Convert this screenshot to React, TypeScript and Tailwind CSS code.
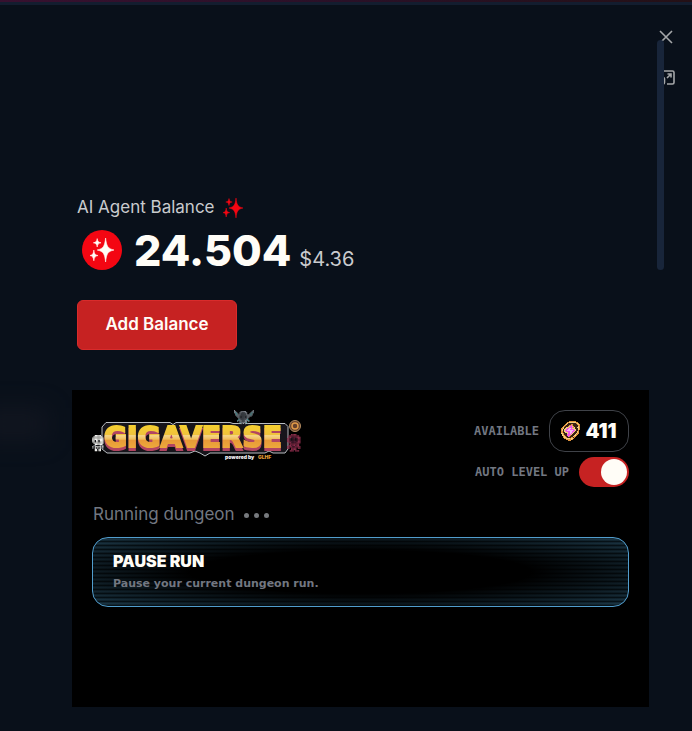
import React, { useState } from 'react';

const palette: Record<string, string> = {
  k: '#17181c',
  w: '#f1f1ee',
  g: '#858a92',
  d: '#4b5057',
  c: '#55b5b5',
  r: '#8b2d4b',
  m: '#4d1b32',
  o: '#e3943b',
  y: '#f4d07c',
  b: '#3a2114',
  p: '#ee56e4',
  l: '#f6b6f0',
};

interface SpriteProps {
  rows: string[];
  x?: number;
  y?: number;
  size: number;
}

const Sprite: React.FC<SpriteProps> = ({ rows, x = 0, y = 0, size }) => (
  <g>
    {rows.map((row, j) =>
      row.split('').map((cell, i) =>
        palette[cell] ? (
          <rect key={`${j}-${i}`} x={x + i * size} y={y + j * size} width={size} height={size} fill={palette[cell]} />
        ) : null
      )
    )}
  </g>
);

const skeleton = [
  '...wwwww...',
  '..wwwwwww..',
  '.wwwwwwwww.',
  '.wwwwwwwww.',
  '.wwkwwkwww.',
  '.wwkwwkwww.',
  '..wwwwwwww.',
  '...wwwwww..',
  '..ggkkkg.g.',
  '.w.wwwww.w.',
  '.g.wkwkw.g.',
  '...wwkww...',
  '...ww.ww...',
];

const knight = [
  'g................g',
  'gg....ggggg.....gg',
  'gcg..ggdddgg...gcg',
  '.gcg.gdddddg..gcg.',
  '.gcgggdddddggggcg.',
  '..gggdddddddgggg..',
  '...ggdkdddkdgg....',
  '....gdddddddg.....',
  '....cgdddddgc.....',
  '...cgggdddgggc....',
  '...gkggdddggkg....',
  '....kcgggggck.....',
  '......gk.kg.......',
];

const imp = [
  '...rrrr....',
  '.rrrrrrrr..',
  '.rrmmmmrrr.',
  'rrmkmmkmrr.',
  'rrmkmmkmrr.',
  'rrmmmmmmrr.',
  '.rrmmmmrrr.',
  '..rrrrrrr..',
  '.rrmrrmrr..',
  'rrrrmmrrrr.',
  'rr.rrrr.rr.',
  '...rrrr....',
  '..rrr.rrr..',
];

const energy = [
  '........ooooooo.....',
  '......ooyyyyyyyoo...',
  '.....oybbbbbbbboyo..',
  '....oybbbboobbbboyo.',
  '...oobbboopobbbbboo.',
  '..oobbboyppyobbbbyo.',
  '.oybbyyyppppoybbyyo.',
  'ooybyyppllpyyybbbyo.',
  'oybyyppllppppyybbyo.',
  'oybyppllllllppybbo..',
  'oobyyppppllppybbyo..',
  'oobbyyyppllpybbbyo..',
  'yyobbbypplpybbbyoo..',
  '.yobbbppppybbbyoo...',
  '.yyobbpppobbbyyo....',
  '..oyobbpobbbyoo.....',
  '..oyyobbbboobo......',
  '...ooyyyyoyyo.......',
  '.....oooooyo........',
  '.......ooo..........',
];

const Sparkles: React.FC<{ className?: string }> = ({ className }) => (
  <svg viewBox="0 0 20 20" className={className} fill="currentColor" stroke="currentColor" strokeWidth=".5" aria-hidden="true">
    <path d="M13 0C13.8 6.8 14.7 8.8 20 10C14.7 11.2 13.8 13.2 13 20C12.2 13.2 11.3 11.2 6 10C11.3 8.8 12.2 6.8 13 0Z" />
    <path d="M6 .5C6.4 3 7 3.6 9.2 4C7 4.4 6.4 5 6 7.5C5.6 5 5 4.4 2.8 4C5 3.6 5.6 3 6 .5Z" />
    <path d="M3.2 10C3.7 13.3 4.1 14 6.7 14.6C4.1 15.2 3.7 16 3.2 19C2.7 16 2.3 15.2 0 14.6C2.3 14 2.7 13.3 3.2 10Z" />
  </svg>
);

const GameLogo = () => (
  <svg width="210" height="54" viewBox="0 0 210 54" role="img" aria-label="Gigaverse powered by GLHF">
    <defs>
      <linearGradient id="gold" x1="0" y1="15" x2="0" y2="38" gradientUnits="userSpaceOnUse">
        <stop offset="0" stopColor="#f6d02f" />
        <stop offset=".42" stopColor="#efc23c" />
        <stop offset=".46" stopColor="#f5d689" />
        <stop offset=".62" stopColor="#f0bd5a" />
        <stop offset=".66" stopColor="#e89a37" />
        <stop offset="1" stopColor="#eda93c" />
      </linearGradient>
    </defs>
    <path
      d="M14 12.500H78L81 14.500L84 12.500H138L141 13.500H193L196 16.500V39L193 43H181L177 41L173 43H118L113 46L108 43L103 41L98 43H15L10 39V17Z"
      fill="#17151b"
      stroke="#b9bdc1"
      strokeWidth="1"
    />
    <text
      x="12"
      y="37"
      fontFamily="'DejaVu Sans', sans-serif"
      fontWeight="700"
      fontSize="28"
      fill="url(#gold)"
      stroke="url(#gold)"
      strokeWidth="2"
      className="drop-shadow-[0_3px_0_#b24562]"
    >
      GIGAVERSE
    </text>
    <Sprite rows={skeleton} x={-1} y={25} size={1.25} />
    <Sprite rows={knight} x={142} y={0} size={1.1} />
    <Sprite rows={imp} x={195} y={24} size={1.35} />
    <circle cx="203" cy="16" r="5.5" fill="#65402c" stroke="#b38c62" />
    <circle cx="203" cy="16" r="3" fill="none" stroke="#e19a48" strokeWidth="1.5" />
    <g fontFamily="Inter, sans-serif" fontWeight="900" fontSize="5">
      <text x="133" y="49" fill="#f1f1f1">powered by</text>
      <text x="166" y="49" fill="#e29a33">GLHF</text>
    </g>
  </svg>
);

const Balance = () => (
  <section className="pl-[5px] text-[#c9cbce]">
    <div className="flex h-6 items-center gap-2 text-[17px]">
      <h2>AI Agent Balance</h2>
      <Sparkles className="size-5 text-[#f40612]" />
    </div>
    <div className="mt-[6px] flex h-12 items-center pl-[5px]">
      <span className="grid size-10 place-items-center rounded-full bg-[#f40612] text-[#fffdf7]">
        <Sparkles className="size-6" />
      </span>
      <p className="ml-3 flex items-baseline gap-2">
        <strong className="text-[43px] leading-12 font-extrabold text-[#fffdf7]">24.504</strong>
        <span className="text-xl">$4.36</span>
      </p>
    </div>
    <button
      type="button"
      className="mt-[26px] h-[50px] w-40 rounded-md border border-[#d92b2b] bg-[#c62222] text-[17px] font-semibold text-[#fffdf7]"
    >
      Add Balance
    </button>
  </section>
);

const GamePanel = () => {
  const [autoLevel, setAutoLevel] = useState(true);

  return (
    <section className="mt-10 min-h-[317px] bg-black p-5 text-[#727781]">
      <div className="flex justify-between">
        <GameLogo />
        <div className="flex flex-col items-end gap-[5px] font-['DejaVu_Sans_Mono',monospace] text-xs font-bold">
          <div className="flex items-center gap-[10px]">
            <span>AVAILABLE</span>
            <div className="flex h-[42px] w-20 items-center justify-center gap-1 rounded-2xl border border-[#3f4248]">
              <svg width="20" height="20" viewBox="0 0 20 20" aria-hidden="true">
                <Sprite rows={energy} size={1} />
              </svg>
              <span className="font-[Inter,sans-serif] text-xl font-black text-[#fffdf7]">411</span>
            </div>
          </div>
          <label className="flex cursor-pointer items-center gap-[10px]">
            <span>AUTO LEVEL UP</span>
            <input
              type="checkbox"
              role="switch"
              checked={autoLevel}
              onChange={e => setAutoLevel(e.target.checked)}
              className="peer sr-only"
            />
            <span className="flex h-[30px] w-[50px] items-center rounded-full bg-[#3f4248] p-0.5 peer-checked:justify-end peer-checked:bg-[#c62222]">
              <span className="size-[26px] rounded-full bg-[#fffdf7]" />
            </span>
          </label>
        </div>
      </div>

      <div className="mt-[14px] flex h-7 items-center gap-[9px] pl-px text-[17px]">
        <p>Running dungeon</p>
        <div className="flex gap-[5px]" aria-hidden="true">
          <span className="size-[5px] rounded-full bg-[#777a7e]" />
          <span className="size-[5px] rounded-full bg-[#777a7e]" />
          <span className="size-[5px] rounded-full bg-[#777a7e]" />
        </div>
      </div>

      <button
        type="button"
        className="mt-2 flex h-[70px] w-full flex-col justify-center rounded-2xl border border-[#519dcd] bg-[radial-gradient(ellipse_at_center,#000_45%,transparent_115%),repeating-linear-gradient(to_bottom,#16303f_0px,#2a5268_2px,#0a1a23_3px,#0a1a23_4px)] px-5 text-left"
      >
        <span className="text-base leading-6 font-black text-[#fffdf7]">PAUSE RUN</span>
        <span className="font-['DejaVu_Sans',sans-serif] text-[11px] leading-[22px] font-bold">
          Pause your current dungeon run.
        </span>
      </button>
    </section>
  );
};

const App: React.FC = () => {
  return (
    <div className="relative min-h-screen overflow-hidden bg-[#09101a] font-[Inter,sans-serif]">
      <div className="h-[2px] bg-linear-to-r from-[#38102f] via-[#2a1027] to-[#241016]" />
      <div className="h-[3px] bg-[#131d2f]" />

      <div className="absolute top-[408px] -left-5 h-8 w-17 bg-[#151822] opacity-70 blur-md" />

      <div className="absolute top-7 right-[17px] flex flex-col items-end gap-[22px] text-[#a5a7a9]">
        <button type="button" aria-label="Close" className="flex h-[18px] w-[18px] items-center justify-center">
          <svg width="14" height="14" viewBox="0 0 14 14" fill="none" stroke="currentColor" strokeWidth="1.6">
            <path d="M1 1L13 13M13 1L1 13" />
          </svg>
        </button>
        <button type="button" aria-label="Pop out" className="flex h-[18px] w-[18px] items-center justify-center">
          <svg width="18" height="18" viewBox="0 0 18 18" fill="none" stroke="currentColor" strokeWidth="1.6">
            <path d="M2 7V4.500C2 3.500 2.500 3 3.500 3H15.500C16.500 3 17 3.500 17 4.500V14.500C17 15.500 16.500 16 15.500 16H10" />
            <path d="M1 9.500H5.500C7 9.500 7.500 10 7.500 11V14.500C7.500 15.500 7 16 6 16H1Z" />
            <path d="M10 10L13.500 6.500M10.500 6H14V9.500" />
          </svg>
        </button>
      </div>
      <div className="absolute top-10 right-7 h-[230px] w-[7px] rounded-full bg-[#18253a]" />

      <main className="pt-[191px] pr-[43px] pb-6 pl-[72px]">
        <Balance />
        <GamePanel />
      </main>
    </div>
  );
};

export default App;
